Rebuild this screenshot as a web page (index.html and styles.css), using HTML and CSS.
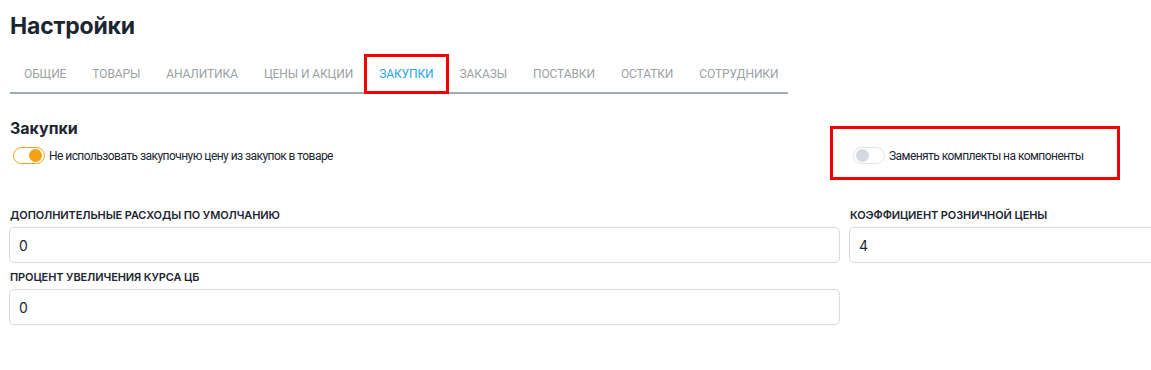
FILE: index.html
```html
<!DOCTYPE html>
<html lang="ru">
<head>
  <meta charset="UTF-8">
  <title>Настройки</title>
  <link rel="stylesheet" href="styles.css">
</head>
<body>
  <div class="page">
    <h1 class="page-title">Настройки</h1>

    <nav class="tabs">
      <a class="tab">Общие</a>
      <a class="tab">Товары</a>
      <a class="tab">Аналитика</a>
      <a class="tab">Цены и акции</a>
      <a class="tab active marked">Закупки</a>
      <a class="tab">Заказы</a>
      <a class="tab">Поставки</a>
      <a class="tab">Остатки</a>
      <a class="tab">Сотрудники</a>
    </nav>

    <section class="section">
      <div class="toggles">
        <div class="col-main">
          <h2 class="section-title">Закупки</h2>
          <label class="switch-row">
            <span class="switch on"><span class="knob"></span></span>
            <span class="switch-label">Не использовать закупочную цену из закупок в товаре</span>
          </label>
        </div>
        <div class="col-side">
          <div class="marked-box">
            <label class="switch-row">
              <span class="switch"><span class="knob"></span></span>
              <span class="switch-label">Заменять комплекты на компоненты</span>
            </label>
          </div>
        </div>
      </div>

      <div class="fields">
        <div class="field col-main">
          <label class="field-label">Дополнительные расходы по умолчанию</label>
          <input class="field-input" type="text" value="0">
        </div>
        <div class="field col-side">
          <label class="field-label">Коэффициент розничной цены</label>
          <input class="field-input" type="text" value="4">
        </div>
        <div class="field col-main">
          <label class="field-label">Процент увеличения курса ЦБ</label>
          <input class="field-input" type="text" value="0">
        </div>
      </div>
    </section>
  </div>
</body>
</html>
```

FILE: styles.css
```css
* {
  box-sizing: border-box;
}
html, body {
  overflow: hidden;
}
body {
  margin: 0;
  background: #fff;
  color: #1b2631;
  font-family: 'Inter', 'Roboto', sans-serif;
}
.page {
  width: 1151px;
  padding: 10px 0 0 10px;
}
.page-title {
  margin: 0;
  font-size: 23px;
  font-weight: 700;
  line-height: 32px;
  letter-spacing: -0.2px;
}
.tabs {
  display: flex;
  width: 778px;
  margin-top: 14px;
  border-bottom: 2px solid #a3acb6;
}
.tab {
  flex: none;
  white-space: nowrap;
  padding: 11px 13px;
  font-family: 'Roboto', sans-serif;
  font-size: 12px;
  line-height: 14px;
  letter-spacing: -0.1px;
  text-transform: uppercase;
  color: #9b9fa4;
}
.tab:first-child {
  padding-left: 14px;
}
.tab.active {
  color: #2aa5e6;
}
.marked {
  outline: 3px solid #f50000;
  outline-offset: -1px;
}
.section {
  margin-top: 24px;
}
.toggles {
  display: flex;
  gap: 9px;
}
.col-main {
  flex: none;
  width: 831px;
}
.col-side {
  flex: none;
  width: 420px;
}
.section-title {
  margin: 0 0 9px;
  font-size: 16px;
  font-weight: 700;
  line-height: 20px;
}
.switch-row {
  display: flex;
  align-items: center;
  gap: 4px;
  padding-left: 3px;
}
.switch {
  width: 32px;
  height: 17px;
  border-radius: 9px;
  border: 1px solid #dfe3e7;
  background: #fff;
  display: flex;
  align-items: center;
  padding: 0 2px;
}
.knob {
  width: 13px;
  height: 13px;
  border-radius: 50%;
  background: #d5d9dd;
}
.switch.on {
  border-color: #f5a216;
  justify-content: flex-end;
}
.switch.on .knob {
  background: #f5a216;
}
.switch-label {
  font-family: 'Roboto', sans-serif;
  font-size: 12px;
  color: #1b2631;
  letter-spacing: -0.55px;
}
.marked-box {
  width: 290px;
  margin: 8px 0 0 -20px;
  height: 54px;
  border: 3px solid #f50000;
  padding: 18px 0 0 17px;
}
.fields {
  display: flex;
  flex-wrap: wrap;
  column-gap: 9px;
  margin-top: 28px;
  margin-left: -1px;
  width: 1300px;
}
.field {
  margin-bottom: 7px;
}
.field-label {
  display: block;
  padding-left: 1px;
  margin-bottom: 5px;
  font-size: 11px;
  font-weight: 600;
  line-height: 14px;
  text-transform: uppercase;
  letter-spacing: -0.1px;
}
.field-input {
  display: block;
  width: 100%;
  height: 36px;
  padding: 0 9px;
  border: 1px solid #d6dbe0;
  border-radius: 5px;
  font-family: 'Inter', sans-serif;
  font-size: 14px;
  color: #1b2631;
}
```
